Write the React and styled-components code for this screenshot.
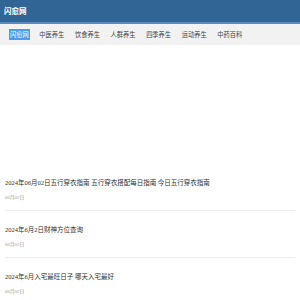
import React from 'react';
import styled, { createGlobalStyle } from 'styled-components';

const GlobalStyle = createGlobalStyle`
  html, body {
    margin: 0;
    padding: 0;
    background: #fff;
  }
  body {
    font-family: "Liberation Serif", "Noto Sans CJK SC", serif;
    color: #333;
  }
`;

const NAV_ITEMS = ['闪愈网', '中医养生', '饮食养生', '人群养生', '四季养生', '运动养生', '中药百科'];

const ARTICLES = [
  { title: '2024年06月02日五行穿衣指南 五行穿衣搭配每日指南 今日五行穿衣指南', date: '06月02日' },
  { title: '2024年6月2日财神方位查询', date: '06月02日' },
  { title: '2024年6月入宅最旺日子 哪天入宅最好', date: '06月02日' },
];

const App = () => (
  <Page>
    <GlobalStyle />
    <Header>
      <Logo>闪愈网</Logo>
    </Header>
    <Nav>
      {NAV_ITEMS.map((item, i) => (
        <NavItem key={item} $active={i === 0}>
          {item}
        </NavItem>
      ))}
    </Nav>
    <AdSlot />
    <List>
      {ARTICLES.map((a) => (
        <Article key={a.title}>
          <Title>{a.title}</Title>
          <DateText>{a.date}</DateText>
        </Article>
      ))}
    </List>
  </Page>
);

const Page = styled.div`
  width: 300px;
  height: 300px;
  overflow: hidden;
`;

const Header = styled.div`
  height: 22px;
  display: flex;
  align-items: center;
  padding: 0 4px;
  background-color: #306596;
  border-bottom: 2px solid #5a8cc4;
`;

const Logo = styled.div`
  color: #fff;
  font-family: "Noto Sans CJK SC", sans-serif;
  font-weight: bold;
  font-size: 7.5px;
  line-height: 10px;
`;

const Nav = styled.div`
  height: 21px;
  display: flex;
  align-items: center;
  gap: 8.6px;
  padding: 0 9px;
  background-color: #f2f2f2;
`;

const NavItem = styled.div`
  font-family: "Noto Sans CJK SC", sans-serif;
  font-size: 6.25px;
  line-height: 11px;
  padding: 0 1px;
  white-space: nowrap;
  color: ${({ $active }) => ($active ? '#fff' : '#444')};
  background-color: ${({ $active }) => ($active ? '#4a9de8' : 'transparent')};
`;

const AdSlot = styled.div`
  height: 118.5px;
`;

const List = styled.div`
  padding: 0 5px;
`;

const Article = styled.div`
  padding: 14.5px 0 7.5px;
  border-bottom: 1px solid #eeeeee;
`;

const Title = styled.div`
  font-size: 6.5px;
  line-height: 10px;
  color: #333;
  white-space: nowrap;
`;

const DateText = styled.div`
  margin-top: 6px;
  font-size: 4.8px;
  line-height: 8px;
  color: #999;
`;

export default App;
